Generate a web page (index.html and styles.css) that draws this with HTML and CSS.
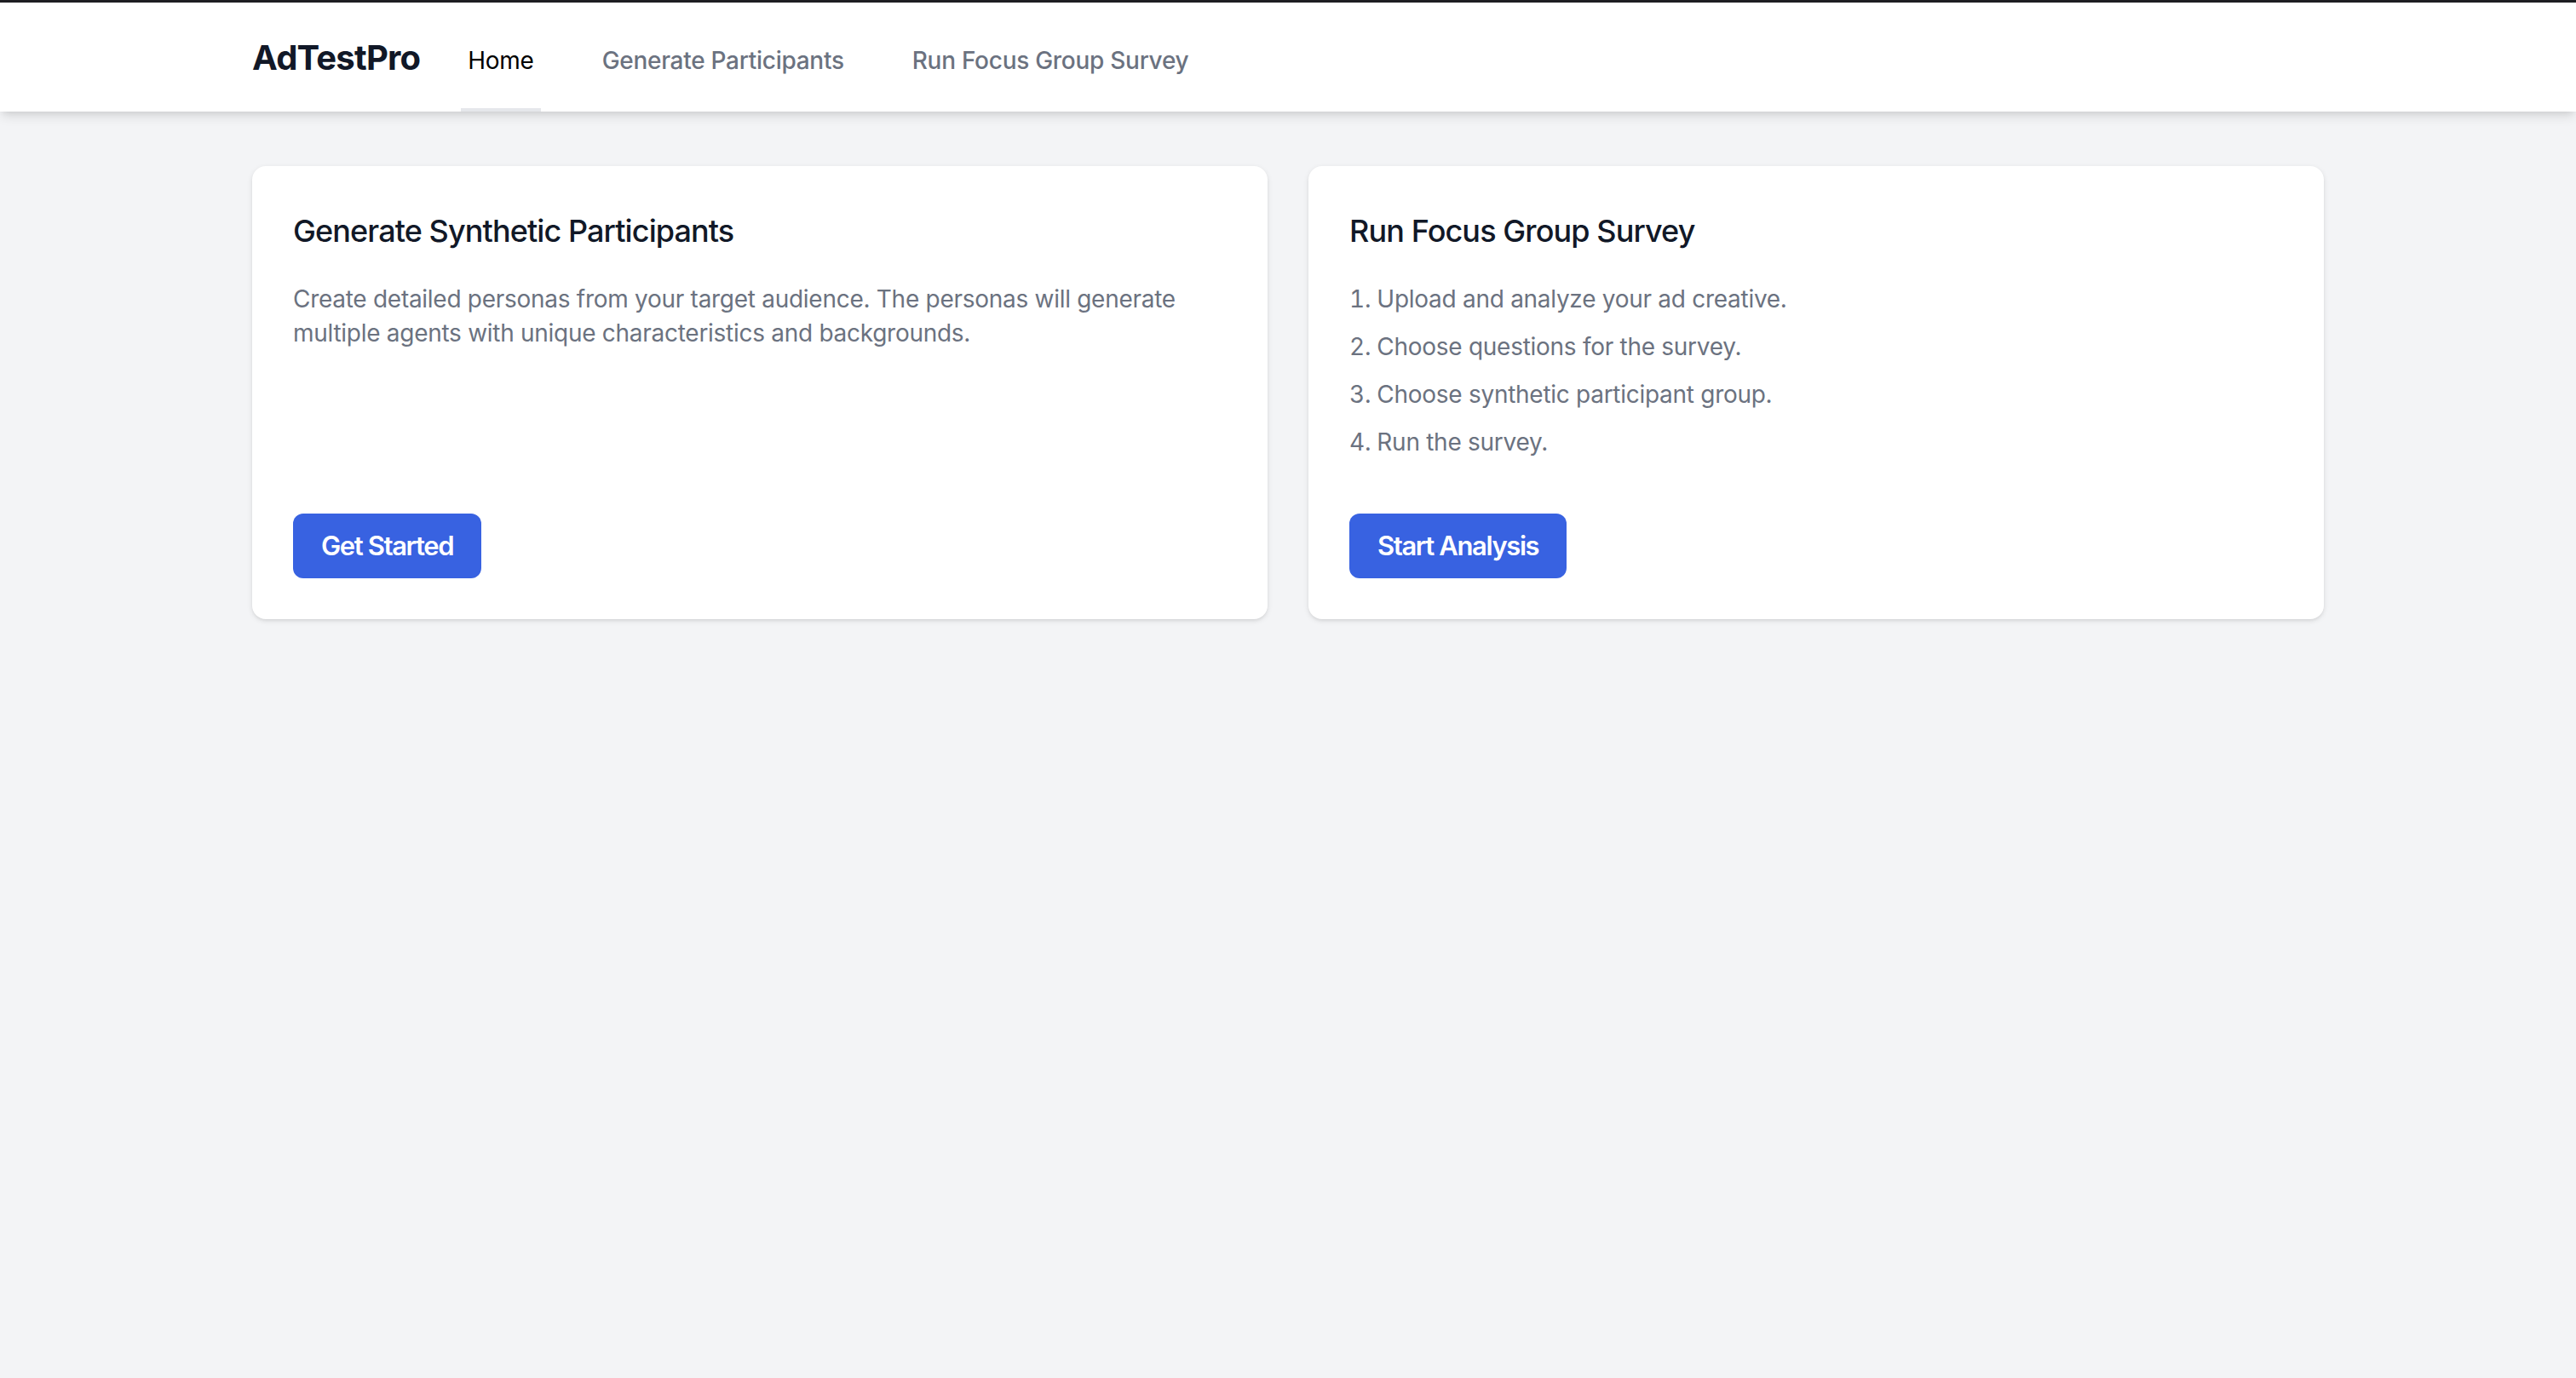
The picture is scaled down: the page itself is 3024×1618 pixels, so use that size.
FILE: index.html
```html
<!DOCTYPE html>
<html lang="en">
<head>
<meta charset="utf-8">
<title>AdTestPro</title>
<link rel="stylesheet" href="styles.css">
</head>
<body>
<div class="topline"></div>
<header class="header">
  <nav class="nav-inner">
    <div class="brand">AdTestPro</div>
    <div class="links">
      <a class="link active" href="#">Home</a>
      <a class="link" href="#">Generate Participants</a>
      <a class="link" href="#">Run Focus Group Survey</a>
    </div>
  </nav>
</header>
<main class="main">
  <section class="card">
    <div class="card-body">
      <h2 class="card-title">Generate Synthetic Participants</h2>
      <p class="card-text">Create detailed personas from your target audience. The personas will generate multiple agents with unique characteristics and backgrounds.</p>
    </div>
    <button class="btn">Get Started</button>
  </section>
  <section class="card">
    <div class="card-body">
      <h2 class="card-title">Run Focus Group Survey</h2>
      <ol class="steps">
        <li>Upload and analyze your ad creative.</li>
        <li>Choose questions for the survey.</li>
        <li>Choose synthetic participant group.</li>
        <li>Run the survey.</li>
      </ol>
    </div>
    <button class="btn">Start Analysis</button>
  </section>
</main>
</body>
</html>
```
FILE: styles.css
```css
html, body {
  margin: 0;
  padding: 0;
}
body {
  background: #f3f4f6;
  font-family: Inter, "Noto Sans", "Liberation Sans", sans-serif;
  min-height: 1618px;
}
.topline {
  height: 3px;
  background: #1e1e22;
}
.header {
  position: relative;
  z-index: 1;
  height: 128px;
  background: #ffffff;
  box-shadow: 0 8px 12px -2px rgba(0,0,0,0.1), 0 4px 8px -4px rgba(0,0,0,0.1);
}
.nav-inner {
  box-sizing: border-box;
  max-width: 2560px;
  height: 100%;
  margin: 0 auto;
  padding: 0 64px;
  display: flex;
}
.brand {
  align-self: center;
  padding-top: 2px;
  font-size: 40px;
  line-height: 56px;
  font-weight: 700;
  color: #111827;
  letter-spacing: -0.02em;
}
.links {
  display: flex;
  margin-left: 48px;
  gap: 64px;
}
.link {
  display: flex;
  align-items: center;
  padding: 11px 8px 0;
  border-bottom: 4px solid transparent;
  font-size: 28px;
  line-height: 40px;
  font-weight: 500;
  color: #6b7280;
  text-decoration: none;
  letter-spacing: -0.01em;
}
.link.active {
  color: #000000;
  font-weight: 400;
  border-bottom-color: #e5e7eb;
}
.main {
  box-sizing: border-box;
  max-width: 2560px;
  margin: 0 auto;
  padding: 64px 64px;
  display: grid;
  grid-template-columns: 1fr 1fr;
  gap: 48px;
}
.card {
  background: #ffffff;
  border-radius: 16px;
  padding: 48px;
  display: flex;
  flex-direction: column;
  box-shadow: 0 2px 6px 0 rgba(0,0,0,0.1), 0 2px 4px -2px rgba(0,0,0,0.1);
}
.card-body {
  flex: 1;
}
.card-title {
  margin: 0 0 32px;
  font-size: 36px;
  line-height: 56px;
  font-weight: 500;
  color: #111827;
  letter-spacing: -0.025em;
}
.card-text {
  margin: 0;
  font-size: 28px;
  line-height: 40px;
  color: #6b7280;
  letter-spacing: -0.01em;
}
.steps {
  margin: 0;
  padding: 0;
  list-style: decimal inside;
  display: flex;
  flex-direction: column;
  gap: 16px;
  font-size: 28px;
  line-height: 40px;
  color: #6b7280;
  letter-spacing: -0.01em;
}
.btn {
  align-self: flex-start;
  margin-top: 64px;
  padding: 14px 33px;
  border: none;
  border-radius: 12px;
  background: #3862e1;
  color: #ffffff;
  font-family: inherit;
  font-size: 31px;
  line-height: 48px;
  font-weight: 600;
  letter-spacing: -0.045em;
  cursor: pointer;
}
```
